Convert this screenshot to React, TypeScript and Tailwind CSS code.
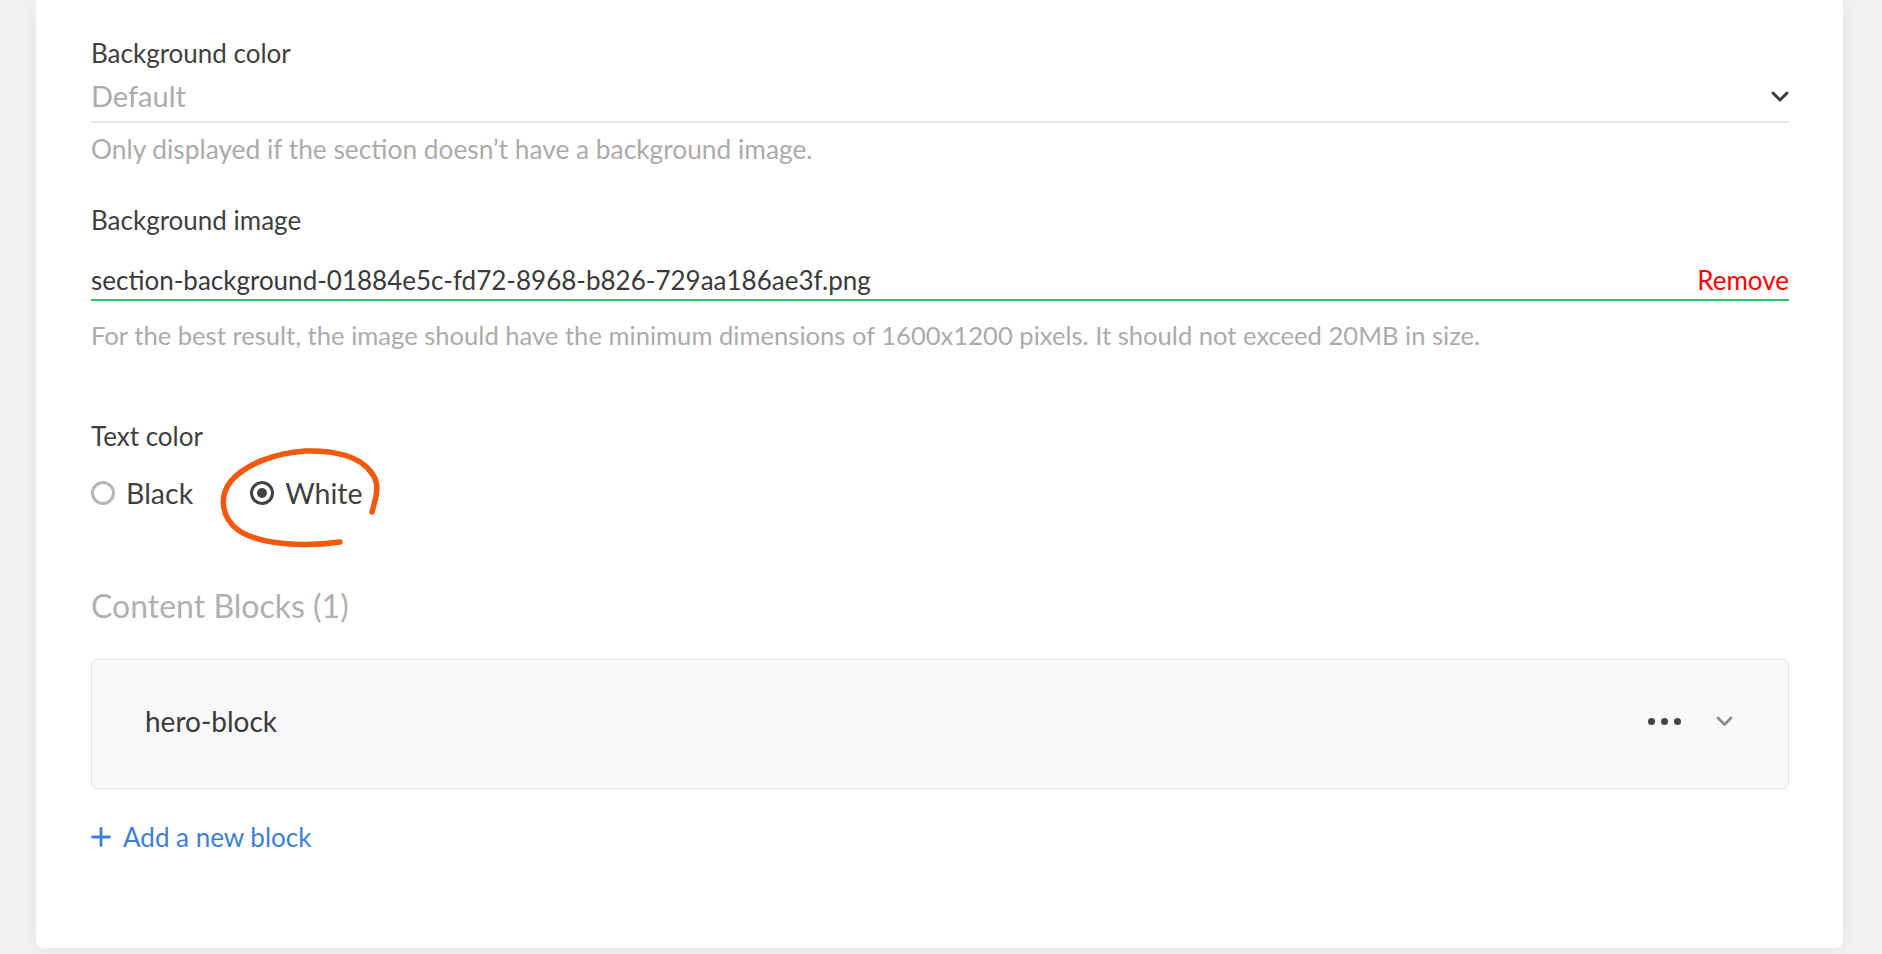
import React, { useState } from 'react';

const HelpText: React.FC<{ children: React.ReactNode; className?: string }> = ({ children, className = '' }) => (
  <p className={`leading-[32px] text-[#ababab] ${className}`}>{children}</p>
);

const Label: React.FC<{ children: React.ReactNode; className?: string }> = ({ children, className = '' }) => (
  <div className={`text-[26px] leading-[32px] text-[#3f3f3f] ${className}`}>{children}</div>
);

const Radio: React.FC<{ label: string; checked: boolean; onSelect: () => void }> = ({ label, checked, onSelect }) => (
  <button type="button" onClick={onSelect} className="flex items-center gap-[11px] h-[36px]">
    <span
      className={`w-[24px] h-[24px] rounded-full flex items-center justify-center ${
        checked ? 'border-[3px] border-[#444]' : 'border-[3px] border-[#b7b7b7]'
      }`}
    >
      {checked && <span className="w-[10px] h-[10px] rounded-full bg-[#444]" />}
    </span>
    <span className="text-[28.5px] leading-[36px] text-[#3f3f3f]">{label}</span>
  </button>
);

export default function App() {
  const [textColor, setTextColor] = useState('white');

  return (
    <div className="h-[954px] overflow-hidden bg-[#f2f2f3] pl-[36px] pr-[39px] font-[Lato,sans-serif]">
      <div className="bg-white rounded-b-[8px] shadow-[0_0_18px_rgba(0,0,0,0.07)] pl-[55px] pr-[54px] pt-[37px] pb-[94px]">
        <Label>Background color</Label>
        <div className="mt-[9px] pb-[7px] border-b-2 border-[#e6e6e6] flex items-center justify-between">
          <span className="text-[29px] leading-[36px] text-[#ababab]">Default</span>
          <svg width="18" height="11" viewBox="0 0 18 11">
            <polyline points="2,2 9,9 16,2" fill="none" stroke="#3a3a3a" strokeWidth="3" strokeLinecap="round" strokeLinejoin="round" />
          </svg>
        </div>
        <HelpText className="mt-[10px] text-[26.3px]">Only displayed if the section doesn’t have a background image.</HelpText>

        <Label className="mt-[39px]">Background image</Label>
        <div className="mt-[27px] pb-[2px] border-b-2 border-[#2bc56c] flex items-center justify-between">
          <span className="text-[26px] leading-[34px] text-[#3a3a3a]">section-background-01884e5c-fd72-8968-b826-729aa186ae3f.png</span>
          <button type="button" className="text-[26px] leading-[34px] text-[#ff0000]">Remove</button>
        </div>
        <HelpText className="mt-[18px] text-[25.6px]">
          For the best result, the image should have the minimum dimensions of 1600x1200 pixels. It should not exceed 20MB in size.
        </HelpText>

        <Label className="mt-[69px]">Text color</Label>
        <div className="relative mt-[23px] flex items-center gap-[57px]">
          <Radio label="Black" checked={textColor === 'black'} onSelect={() => setTextColor('black')} />
          <Radio label="White" checked={textColor === 'white'} onSelect={() => setTextColor('white')} />
          <svg
            className="absolute left-[119px] top-[-35px] pointer-events-none"
            width="180"
            height="120"
            viewBox="0 0 180 120"
          >
            <path
              d="M162,72 C166,58 170,45 163,35 C152,16 124,10 95,11 C65,13 36,24 21,41 C9,56 11,77 28,90 C50,105 95,107 130,102"
              fill="none"
              stroke="#f4580c"
              strokeWidth="5.5"
              strokeLinecap="round"
            />
          </svg>
        </div>

        <div className="mt-[75px] text-[32px] leading-[40px] text-[#b0b0b0]">Content Blocks (1)</div>

        <div className="mt-[33px] h-[130px] rounded-[7px] border border-[#e4e4e6] bg-[#f8f8fa] pl-[53px] pr-[55px] pb-[6px] flex items-center justify-between">
          <span className="text-[28px] leading-[36px] text-[#3a3a3a]">hero-block</span>
          <div className="flex items-center gap-[35px]">
            <div className="flex items-center gap-[6px]">
              <span className="w-[7px] h-[7px] rounded-full bg-[#444]" />
              <span className="w-[7px] h-[7px] rounded-full bg-[#444]" />
              <span className="w-[7px] h-[7px] rounded-full bg-[#444]" />
            </div>
            <svg width="17" height="11" viewBox="0 0 17 11">
              <polyline points="2,2 8.5,8.5 15,2" fill="none" stroke="#8a8a8a" strokeWidth="2.6" strokeLinecap="round" strokeLinejoin="round" />
            </svg>
          </div>
        </div>

        <button type="button" className="mt-[31px] flex items-center gap-[12px] text-[#3d7fd9]">
          <svg width="20" height="20" viewBox="0 0 20 20">
            <path d="M10 1.5V18.5M1.5 10H18.5" stroke="#3d7fd9" strokeWidth="2.8" strokeLinecap="round" />
          </svg>
          <span className="text-[26px] leading-[34px]">Add a new block</span>
        </button>
      </div>
    </div>
  );
}
